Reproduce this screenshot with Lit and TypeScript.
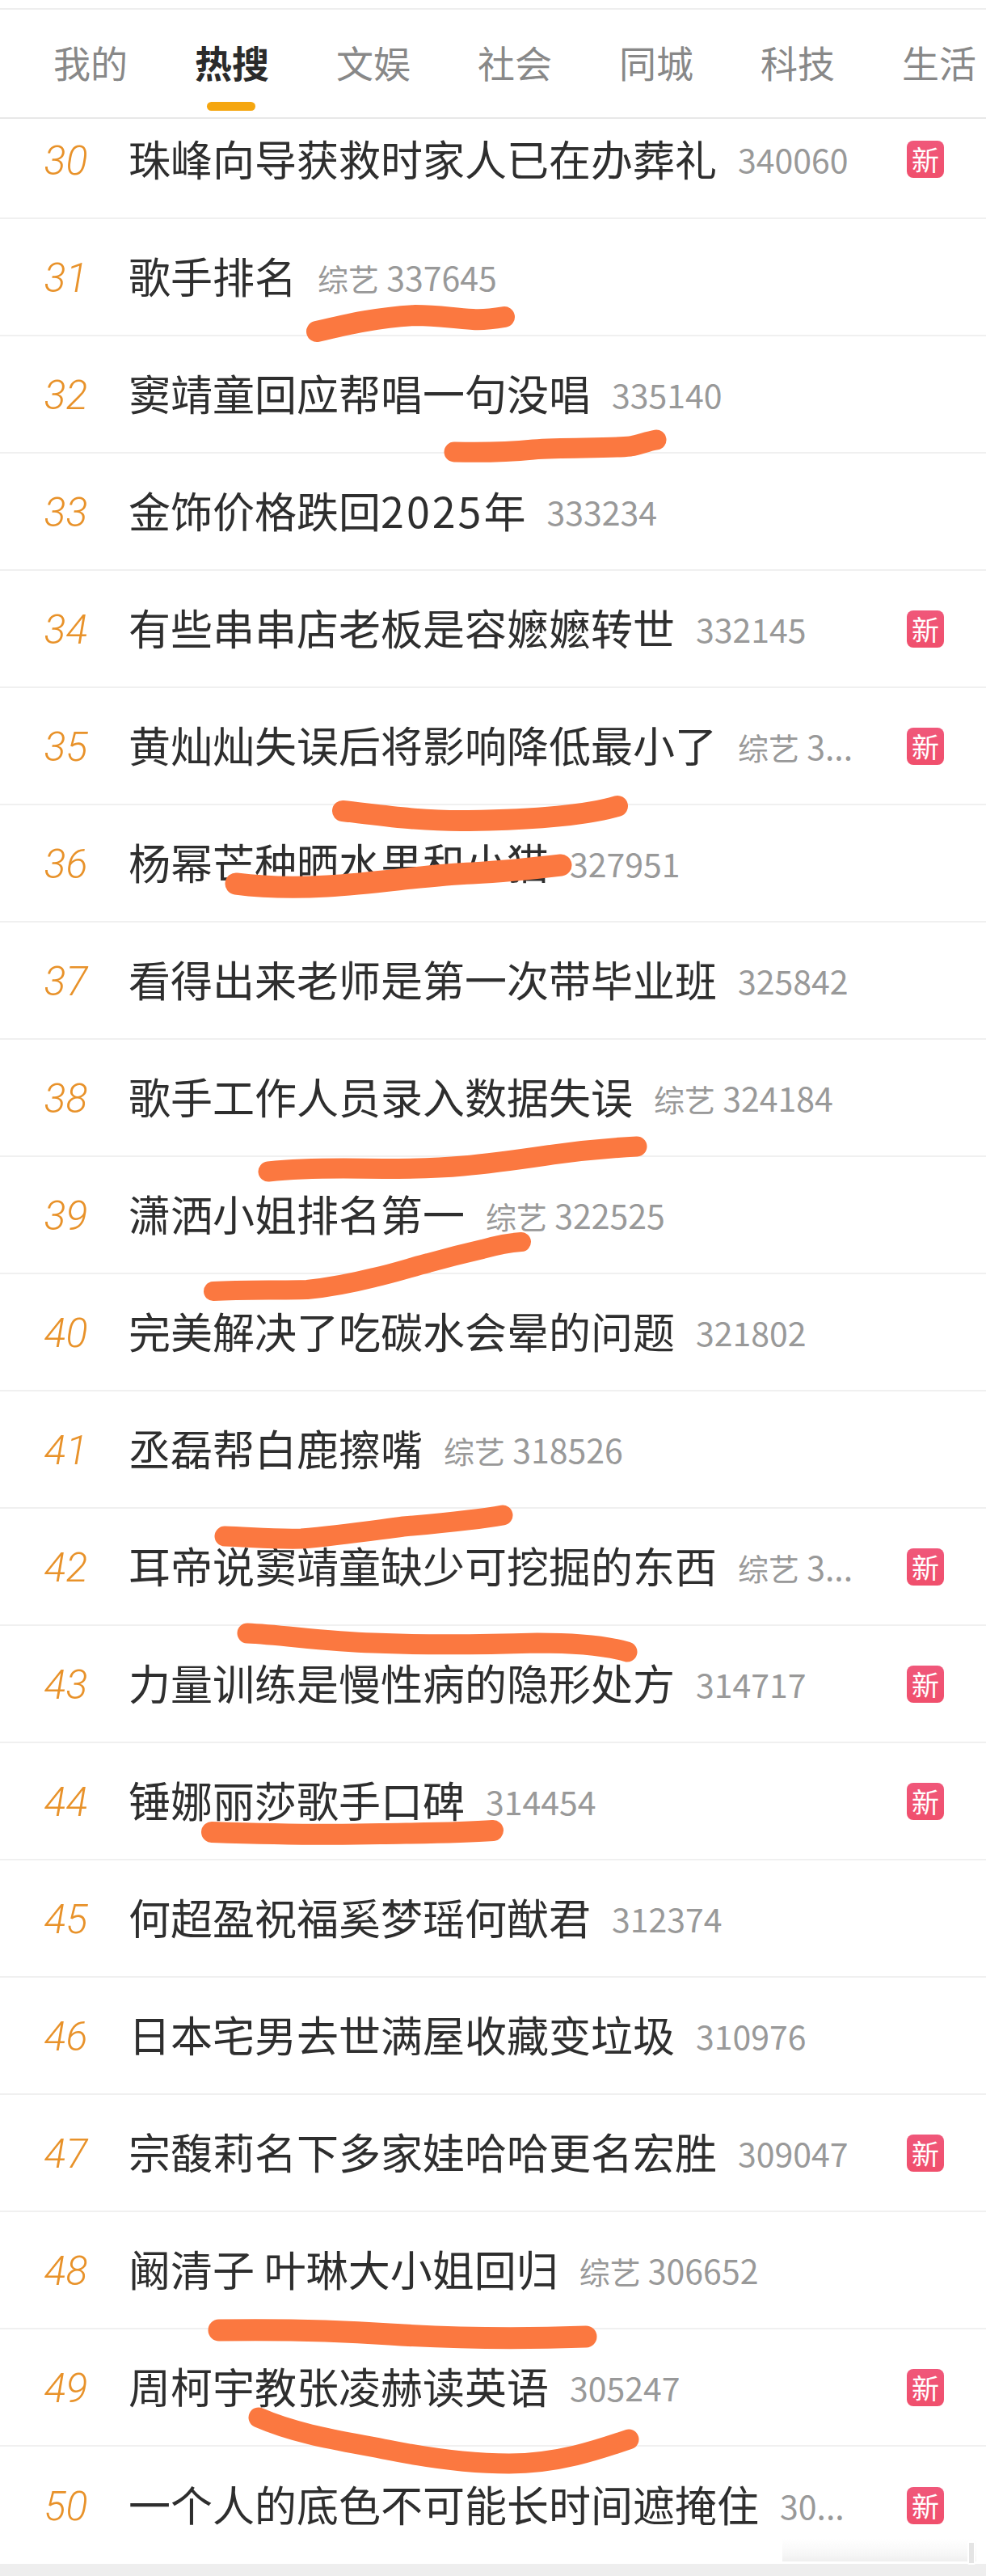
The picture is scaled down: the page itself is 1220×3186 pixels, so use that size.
import { LitElement, html, css, svg } from 'lit';
import { customElement } from 'lit/decorators.js';

type Row = { rank: number; title: string; tag?: string; heat: string; isNew?: boolean };

const TABS = ['我的', '热搜', '文娱', '社会', '同城', '科技', '生活'];

const ROWS: Row[] = [
    { rank: 30, title: '珠峰向导获救时家人已在办葬礼', heat: '340060', isNew: true },
    { rank: 31, title: '歌手排名', tag: '综艺', heat: '337645' },
    { rank: 32, title: '窦靖童回应帮唱一句没唱', heat: '335140' },
    { rank: 33, title: '金饰价格跌回2025年', heat: '333234' },
    { rank: 34, title: '有些串串店老板是容嬷嬷转世', heat: '332145', isNew: true },
    { rank: 35, title: '黄灿灿失误后将影响降低最小了', tag: '综艺', heat: '3...', isNew: true },
    { rank: 36, title: '杨幂芒种晒水果和小猫', heat: '327951' },
    { rank: 37, title: '看得出来老师是第一次带毕业班', heat: '325842' },
    { rank: 38, title: '歌手工作人员录入数据失误', tag: '综艺', heat: '324184' },
    { rank: 39, title: '潇洒小姐排名第一', tag: '综艺', heat: '322525' },
    { rank: 40, title: '完美解决了吃碳水会晕的问题', heat: '321802' },
    { rank: 41, title: '丞磊帮白鹿擦嘴', tag: '综艺', heat: '318526' },
    { rank: 42, title: '耳帝说窦靖童缺少可挖掘的东西', tag: '综艺', heat: '3...', isNew: true },
    { rank: 43, title: '力量训练是慢性病的隐形处方', heat: '314717', isNew: true },
    { rank: 44, title: '锤娜丽莎歌手口碑', heat: '314454', isNew: true },
    { rank: 45, title: '何超盈祝福奚梦瑶何猷君', heat: '312374' },
    { rank: 46, title: '日本宅男去世满屋收藏变垃圾', heat: '310976' },
    { rank: 47, title: '宗馥莉名下多家娃哈哈更名宏胜', heat: '309047', isNew: true },
    { rank: 48, title: '阚清子 叶琳大小姐回归', tag: '综艺', heat: '306652' },
    { rank: 49, title: '周柯宇教张凌赫读英语', heat: '305247', isNew: true },
    { rank: 50, title: '一个人的底色不可能长时间遮掩住', heat: '30...', isNew: true },
];

// hand-drawn marker strokes, page coordinates: [d, width]
const STROKES: [string, number][] = [
    ['M392 410 C430 401 470 392 514 390 C545 390 560 394 585 395 C600 396 612 394 624 392', 26],
    ['M562 559 C600 560 630 559 660 556 C700 553 750 555 780 552 C792 550 800 546 812 544', 25],
    ['M424 1003 C470 1008 520 1016 580 1015 C650 1014 720 1010 764 997', 26],
    ['M292 1093 C330 1098 370 1098 405 1096 C470 1092 530 1082 584 1080 C620 1078 660 1074 694 1070', 27],
    ['M332 1449 C360 1446 395 1445 425 1445 C480 1446 530 1446 573 1442 C610 1439 650 1433 684 1428 C720 1423 750 1420 788 1418', 25],
    ['M264 1597 C300 1595 340 1596 380 1595 C410 1592 435 1587 463 1580 C490 1574 510 1567 530 1562 C555 1555 575 1550 597 1545 C615 1540 630 1537 645 1536', 24],
    ['M278 1900 C310 1901 340 1904 373 1903 C420 1899 460 1893 499 1888 C545 1884 590 1880 622 1874', 25],
    ['M306 2020 C350 2022 400 2030 462 2032 C530 2035 600 2034 665 2032 C700 2032 745 2034 776 2043', 25],
    ['M262 2266 C320 2268 400 2270 470 2268 C530 2267 570 2267 610 2264', 26],
    ['M271 2882 C340 2881 410 2882 482 2887 C560 2892 640 2893 725 2890', 27],
    ['M320 2990 C370 3012 430 3020 480 3030 C530 3040 580 3047 630 3047 C690 3047 740 3030 778 3017', 25],
];

@customElement('app-root')
export class AppRoot extends LitElement {
    static styles = css`
        :host {
            display: block;
            position: relative;
            width: 1220px;
            height: 3186px;
            overflow: hidden;
            background: #eeeeee;
            font-family: "Noto Sans CJK SC", "Noto Sans", sans-serif;
        }

        .page {
            background: #fff;
        }

        .top-line {
            height: 10px;
            border-bottom: 2px solid #eeeeee;
            box-sizing: content-box;
        }

        .tabs {
            display: flex;
            gap: 83px;
            height: 135px;
            box-sizing: border-box;
            padding: 30px 0 0 66px;
            border-bottom: 2px solid #e8e8e8;
        }

        .tab {
            position: relative;
            width: 92px;
            flex: none;
            font-size: 46px;
            line-height: 68px;
            color: #888;
            white-space: nowrap;
        }

        .tab.on {
            color: #2b2b2b;
            font-weight: 700;
        }

        .tab.on::after {
            content: '';
            position: absolute;
            left: 15px;
            top: 84px;
            width: 60px;
            height: 11px;
            border-radius: 6px;
            background: #f5a60f;
        }

        .row {
            display: flex;
            align-items: center;
            height: 145px;
            box-sizing: border-box;
            border-bottom: 2px solid #f0f0f0;
            padding-right: 52px;
        }

        .row:first-child {
            height: 124px;
            padding-bottom: 22px;
        }

        .row:last-child {
            border-bottom: none;
        }

        .rank {
            flex: none;
            width: 163px;
            margin-top: 3px;
            text-align: center;
            font-family: Roboto, sans-serif;
            font-size: 50px;
            font-style: italic;
            font-weight: 300;
            color: #e8922a;
        }

        .title {
            flex: none;
            margin-top: -4px;
            margin-left: -4px;
            font-size: 52px;
            color: #2e2e2e;
            white-space: nowrap;
        }

        .title .digits {
            letter-spacing: 3px;
        }

        .meta {
            flex: 1;
            min-width: 0;
            margin-left: 26px;
            margin-top: -2px;
            font-size: 41px;
            color: #999;
            white-space: nowrap;
            overflow: hidden;
        }

        .meta .tag {
            font-size: 38px;
        }

        .badge {
            flex: none;
            width: 46px;
            height: 46px;
            margin-left: 48px;
            border-radius: 8px;
            background: linear-gradient(#f0577a, #f04f6c);
            color: #fff;
            font-size: 34px;
            line-height: 46px;
            text-align: center;
        }

        .ink {
            position: absolute;
            inset: 0;
            width: 1220px;
            height: 3186px;
            pointer-events: none;
        }

        .smudge {
            position: absolute;
            left: 968px;
            top: 3140px;
            width: 240px;
            height: 28px;
            background: linear-gradient(#ffffff, #f6f6f6 70%, #efefef);
        }

        .grip {
            position: absolute;
            left: 1197px;
            top: 3143px;
            width: 6px;
            height: 25px;
            border: 2px solid #fff;
            border-radius: 2px;
            background: #e4e4e4;
        }
    `;

    private _renderTitle(title: string) {
        return title.split(/(\d+)/).map(part =>
            /^\d+$/.test(part) ? html`<span class="digits">${part}</span>` : part);
    }

    render() {
        return html`
            <div class="page">
                <div class="top-line"></div>
                <div class="tabs">
                    ${TABS.map((t, i) => html`<div class="tab ${i === 1 ? 'on' : ''}">${t}</div>`)}
                </div>
                <div class="list">
                    ${ROWS.map(r => html`
                        <div class="row">
                            <div class="rank">${r.rank}</div>
                            <div class="title">${this._renderTitle(r.title)}</div>
                            <div class="meta">${r.tag ? html`<span class="tag">${r.tag}</span> ` : ''}${r.heat}</div>
                            ${r.isNew ? html`<div class="badge">新</div>` : ''}
                        </div>
                    `)}
                </div>
            </div>
            <svg class="ink" viewBox="0 0 1220 3186" fill="none" stroke="#fb7840" stroke-linecap="round" stroke-linejoin="round">
                ${STROKES.map(([d, w]) => svg`<path d=${d} stroke-width=${w}></path>`)}
            </svg>
            <div class="smudge"></div>
            <div class="grip"></div>
        `;
    }
}
